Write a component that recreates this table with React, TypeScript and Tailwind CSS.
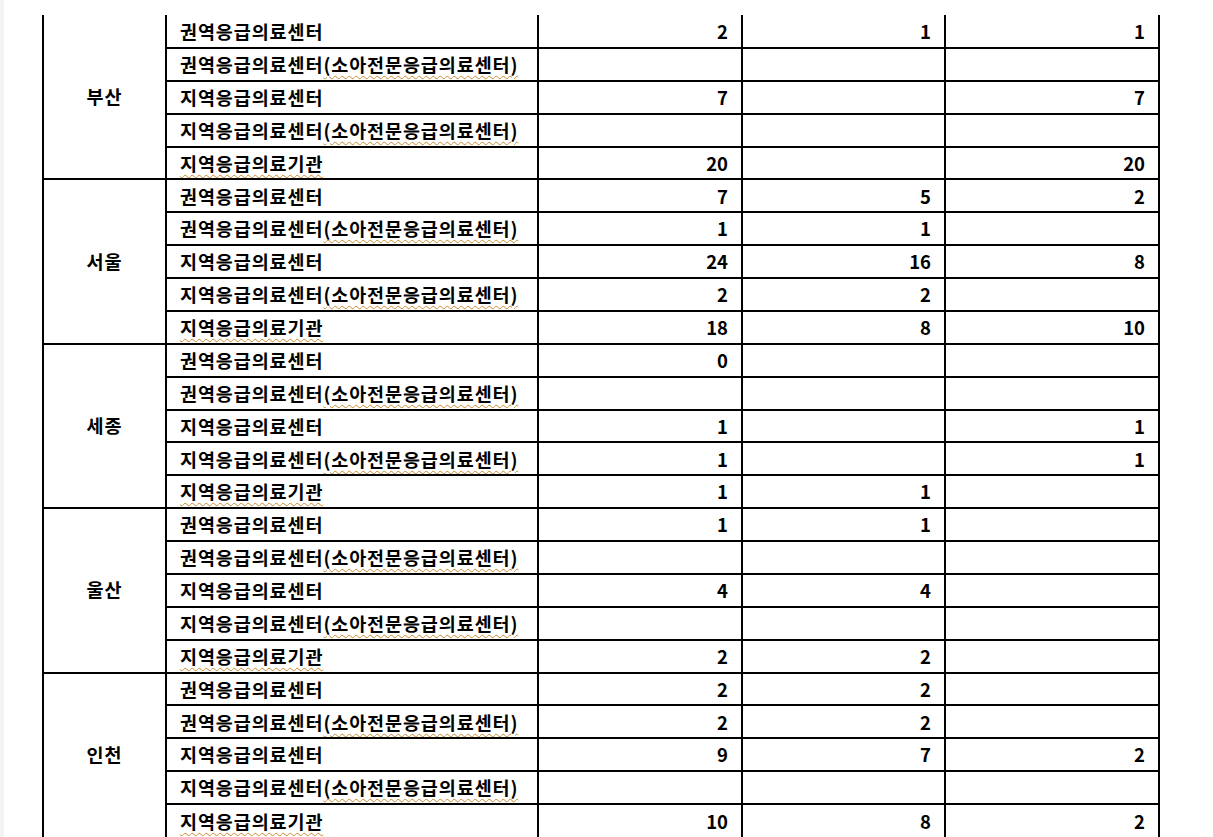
const NAMES = [
  "권역응급의료센터",
  "권역응급의료센터(소아전문응급의료센터)",
  "지역응급의료센터",
  "지역응급의료센터(소아전문응급의료센터)",
  "지역응급의료기관",
];

const REGIONS: { region: string; values: (number | undefined)[][] }[] = [
  {
    region: "부산",
    values: [[2, 1, 1], [], [7, undefined, 7], [], [20, undefined, 20]],
  },
  {
    region: "서울",
    values: [[7, 5, 2], [1, 1], [24, 16, 8], [2, 2], [18, 8, 10]],
  },
  {
    region: "세종",
    values: [[0], [], [1, undefined, 1], [1, undefined, 1], [1, 1]],
  },
  {
    region: "울산",
    values: [[1, 1], [], [4, 4], [], [2, 2]],
  },
  {
    region: "인천",
    values: [[2, 2], [2, 2], [9, 7, 2], [], [10, 8, 2]],
  },
];

const squiggle =
  "underline decoration-wavy decoration-[#c98a2e] decoration-[1px] underline-offset-[3px]";

function Name({ name }: { name: string }) {
  const i = name.indexOf("(");
  if (name === "지역응급의료기관") return <span className={squiggle}>{name}</span>;
  if (i < 0) return <span>{name}</span>;
  return (
    <span>
      {name.slice(0, i)}
      <span className={squiggle}>{name.slice(i)}</span>
    </span>
  );
}

const cell = "border-[2px] border-black h-[32.88px] p-0 align-middle";

export default function App() {
  const last = REGIONS.length - 1;
  return (
    <div
      className="flex h-[837px] bg-white text-black font-bold text-[18.5px] overflow-hidden"
      style={{ fontFamily: '"Noto Sans CJK KR", "Noto Sans", sans-serif' }}
    >
      <div className="w-[4px] bg-[#f3f3f3] shrink-0" />
      <div className="pl-[38px] pt-[15px]">
        <table className="border-collapse table-fixed w-[1116px]">
          <colgroup>
            <col className="w-[123px]" />
            <col className="w-[372px]" />
            <col className="w-[204px]" />
            <col className="w-[203px]" />
            <col className="w-[214px]" />
          </colgroup>
          <tbody>
            {REGIONS.map((r, ri) =>
              NAMES.map((n, ni) => {
                const v = r.values[ni] ?? [];
                const top = ri === 0 && ni === 0 ? " border-t-0" : "";
                const bottom = ri === last && ni === NAMES.length - 1 ? " border-b-0" : "";
                const edge = top + bottom;
                return (
                  <tr key={`${r.region}-${ni}`}>
                    {ni === 0 && (
                      <td
                        rowSpan={5}
                        className={`${cell}${top}${ri === last ? " border-b-0" : ""} text-center tracking-[1px]`}
                      >
                        {r.region}
                      </td>
                    )}
                    <td className={`${cell}${edge} pl-[13px] whitespace-nowrap leading-none tracking-[0.9px]`}>
                      <Name name={n} />
                    </td>
                    {[0, 1, 2].map((k) => (
                      <td key={k} className={`${cell}${edge} text-right pr-[13px] leading-none`}>
                        {v[k] ?? ""}
                      </td>
                    ))}
                  </tr>
                );
              })
            )}
          </tbody>
        </table>
      </div>
    </div>
  );
}
